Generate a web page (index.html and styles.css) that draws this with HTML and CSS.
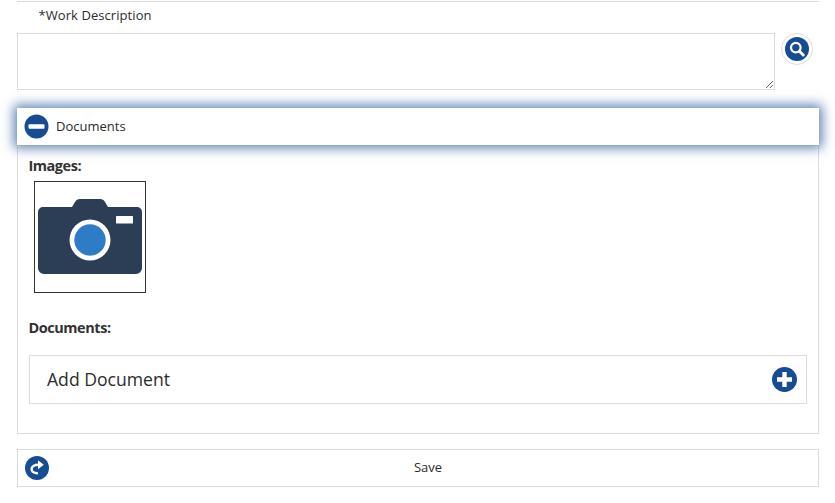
FILE: index.html
```html
<!DOCTYPE html>
<html lang="en">
<head>
<meta charset="utf-8">
<title>Work Description</title>
<link rel="stylesheet" href="styles.css">
</head>
<body>
<main class="page">
  <label class="field-label" for="work">*Work Description</label>
  <div class="field-row">
    <textarea class="field-input" id="work"></textarea>
    <button class="search-btn" type="button" aria-label="Search">
      <svg class="icon" viewBox="0 0 24 24" width="24" height="24">
        <circle cx="12" cy="12" r="12" fill="#154c94"/>
        <circle cx="10.8" cy="10.600" r="4.800" fill="none" stroke="#fff" stroke-width="2.200"/>
        <path d="M14.400 14.200l3.800 3.800" stroke="#fff" stroke-width="3" stroke-linecap="round"/>
      </svg>
    </button>
  </div>
  <section class="panel">
    <header class="panel-head">
      <svg class="icon" viewBox="0 0 25 25" width="25" height="25">
        <circle cx="12.500" cy="12.500" r="12" fill="#154c94"/>
        <rect x="4.500" y="10.200" width="16" height="4.600" rx="1" fill="#fff"/>
      </svg>
      <span>Documents</span>
    </header>
    <div class="panel-body">
      <h3 class="sub-title">Images:</h3>
      <div class="thumb">
        <svg viewBox="0 0 110 110" width="110" height="110">
          <path d="M3 30a5 5 0 0 1 5-5h29l3-5q1.500-3 5-3h20q3.500 0 5 3l3 5h29a5 5 0 0 1 5 5v56a6 6 0 0 1-6 6H9a6 6 0 0 1-6-6z" fill="#2c3e55"/>
          <rect x="81" y="34" width="17" height="7.500" rx=".5" fill="#fff"/>
          <circle cx="55" cy="58" r="20.500" fill="#fff"/>
          <circle cx="55" cy="58" r="15.700" fill="#2f7cc6"/>
        </svg>
      </div>
      <h3 class="sub-title docs-title">Documents:</h3>
      <div class="add-doc">
        <span>Add Document</span>
        <svg class="icon" viewBox="0 0 25 25" width="25" height="25">
          <circle cx="12.500" cy="12.500" r="12.500" fill="#154c94"/>
          <path d="M10.300 5h4.400v5.300H20v4.400h-5.300V20h-4.400v-5.300H5v-4.400h5.300z" fill="#fff"/>
        </svg>
      </div>
    </div>
  </section>
  <footer class="save-bar">
    <svg class="icon save-icon" viewBox="0 0 24 24" width="24" height="24">
      <circle cx="12" cy="12" r="12" fill="#154c94"/>
      <path d="M13.500 8.800C9 8.800 6.600 10.800 6.600 13c0 2.400 2.400 3.900 5.400 4.300" fill="none" stroke="#fff" stroke-width="2.400" stroke-linecap="round"/>
      <path d="M13 4.300l5.800 4.500L13 13.300z" fill="#fff"/>
    </svg>
    <span>Save</span>
  </footer>
</main>
</body>
</html>
```
FILE: styles.css
```css
* { box-sizing: border-box; }
html, body { margin: 0; padding: 0; background: #fff; }
body { font-family: "Open Sans", "Liberation Sans", sans-serif; color: #2b2b2b; height: 503px; overflow: hidden; }
.page { width: 802px; margin: 1px 0 0 17px; border-top: 1px solid #dcdcdc; }
.icon { display: block; flex: none; }
.field-label { display: block; margin-left: 21.500px; padding-top: 4px; height: 31px; font-size: 13px; line-height: 18px; letter-spacing: .07px; }
.field-row { display: flex; align-items: flex-start; height: 75px; }
.field-input { display: block; width: 758px; height: 57px; min-height: 57px; margin: 0; border: 1px solid #dcdcdc; background: #fff; resize: vertical; padding: 4px; outline: 0; }
.search-btn { width: 32px; height: 32px; margin: 0 0 0 6px; padding: 3px; border: 1px solid #dedede; border-radius: 50%; background: #fff; }
.search-btn .icon { margin: 0; }
.panel { height: 326px; border: 1px solid #dcdcdc; border-top: 0; }
.panel-head { display: flex; align-items: center; gap: 7px; height: 37px; margin: 0 -1px; padding: 0 0 1px 7px; background: #fff; font-size: 13px; box-shadow: 0 0 11px 3px rgba(30, 80, 150, .72); position: relative; }
.panel-body { padding: 11px 11px 0; }
.sub-title { margin: 0 0 0 -.6px; font-size: 14.500px; line-height: 20px; font-weight: 700; letter-spacing: -.45px; color: #333; }
.thumb { width: 112px; height: 112px; margin: 5px 0 0 5px; border: 1px solid #333; }
.thumb svg { display: block; }
.docs-title { margin-top: 25px; }
.add-doc { display: flex; align-items: center; justify-content: space-between; height: 49px; margin-top: 17px; padding: 0 9px 1px 17px; border: 1px solid #dcdcdc; font-size: 17.600px; }
.add-doc .icon { margin-top: 1px; }
.save-bar { position: relative; display: flex; align-items: center; justify-content: center; height: 38px; margin-top: 15px; border: 1px solid #dcdcdc; font-size: 13px; padding: 0 0 3px 20px; }
.save-icon { position: absolute; left: 7px; top: 6px; }
```
